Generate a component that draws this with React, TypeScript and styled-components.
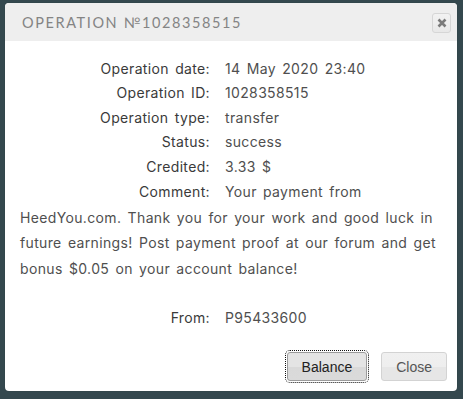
import React from "react";
import styled, { createGlobalStyle } from "styled-components";

const Global = createGlobalStyle`
  html, body { margin: 0; padding: 0; background: #34484e; }
  body { width: 463px; height: 399px; overflow: hidden; }
`;

const Page = styled.div`
  padding: 3px 6px 0 5px;
`;

const Dialog = styled.div`
  width: 452px;
  height: 388px;
  background: #fff;
  border-radius: 4px;
  overflow: hidden;
  display: flex;
  flex-direction: column;
  box-shadow: 0 0 1px rgba(0,0,0,0.3);
`;

const Header = styled.div`
  height: 38px;
  flex: none;
  background: #eeeeee;
  display: flex;
  align-items: center;
  justify-content: space-between;
  padding: 0 6px 0 17px;
`;

const Title = styled.div`
  font-family: Lato, "DejaVu Sans", sans-serif;
  font-size: 14.5px;
  letter-spacing: 1.6px;
  color: #848484;
  font-weight: 400;
`;

const CloseX = styled.button`
  width: 19px;
  height: 20px;
  padding: 0;
  margin-top: 1px;
  border: 1px solid #d6d6d6;
  border-radius: 3px;
  background: linear-gradient(#f2f2f2, #e8e8e8);
  display: flex;
  align-items: center;
  justify-content: center;
`;

const Body = styled.div`
  flex: 1;
  padding: 16px 15px 0 15px;
  font-family: Inter, "Open Sans", sans-serif;
  font-size: 14px;
  letter-spacing: 0.35px;
  word-spacing: 2px;
  color: #555;
`;

const Row = styled.div<{ $lh?: number; $gap?: number }>`
  line-height: ${(p) => p.$lh ?? 24.4}px;
  margin-top: ${(p) => p.$gap ?? 0}px;
`;

const Label = styled.span`
  display: inline-block;
  width: 190px;
  text-align: right;
  color: #3a3a3a;
  margin-right: 15px;
`;

const Value = styled.span`
  color: #4f4f4f;
`;

const Footer = styled.div`
  display: flex;
  justify-content: flex-end;
  gap: 14px;
  padding: 0 10px 10px 0;
`;

const Btn = styled.button<{ $focus?: boolean }>`
  font-family: "Liberation Sans", Arial, sans-serif;
  font-size: 14px;
  height: 29px;
  padding: 0 14px;
  border-radius: 3px;
  border: 1px solid ${(p) => (p.$focus ? "#9a9a9a" : "#d3d3d3")};
  color: ${(p) => (p.$focus ? "#222" : "#555")};
  background: ${(p) =>
    p.$focus
      ? "linear-gradient(#e4e4e4 0%, #e4e4e4 50%, #d9d9d9 51%, #dadada 100%)"
      : "linear-gradient(#f0f0f0 0%, #eeeeee 50%, #e6e6e6 51%, #e6e6e6 100%)"};
  outline: ${(p) => (p.$focus ? "1px dotted #111" : "none")};
  outline-offset: 1px;
`;

const rows: [string, string][] = [
  ["Operation date:", "14 May 2020 23:40"],
  ["Operation ID:", "1028358515"],
  ["Operation type:", "transfer"],
  ["Status:", "success"],
  ["Credited:", "3.33 $"],
];

export default function App() {
  return (
    <>
      <Global />
      <Page>
        <Dialog>
          <Header>
            <Title>OPERATION №1028358515</Title>
            <CloseX aria-label="close">
              <svg width="10" height="10" viewBox="0 0 10 10">
                <path d="M1.5 1.5 L8.5 8.5 M8.5 1.5 L1.5 8.5" stroke="#7a7a7a" strokeWidth="2.6" />
              </svg>
            </CloseX>
          </Header>
          <Body>
            {rows.map(([l, v]) => (
              <Row key={l}>
                <Label>{l}</Label>
                <Value>{v}</Value>
              </Row>
            ))}
            <Row $lh={25.5}>
              <Label>Comment:</Label>
              <Value>
                Your payment from HeedYou.com. Thank you for your work and good luck in future
                earnings! Post payment proof at our forum and get bonus $0.05 on your account
                balance!
              </Value>
            </Row>
            <Row $gap={25}>
              <Label>From:</Label>
              <Value>P95433600</Value>
            </Row>
          </Body>
          <Footer>
            <Btn $focus>Balance</Btn>
            <Btn>Close</Btn>
          </Footer>
        </Dialog>
      </Page>
    </>
  );
}
